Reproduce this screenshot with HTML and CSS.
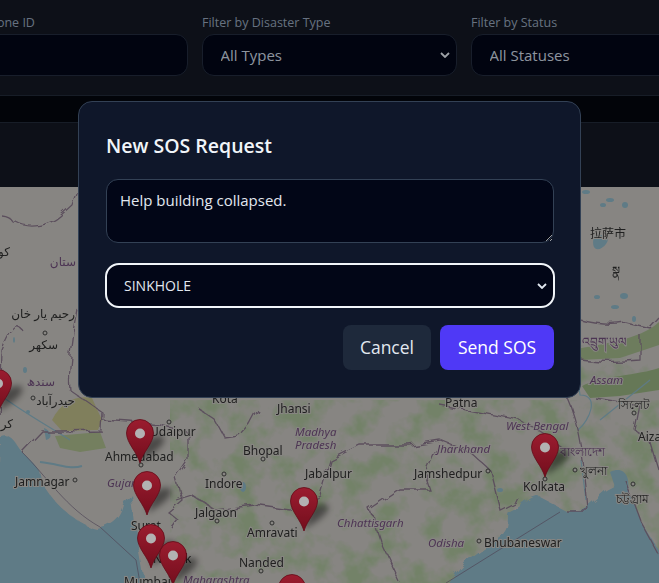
FILE: index.html
```html
<!DOCTYPE html>
<html lang="en">
<head>
  <meta charset="UTF-8">
  <meta name="viewport" content="width=device-width, initial-scale=1.0">
  <title>SOS Requests</title>
  <link rel="stylesheet" href="styles.css">
</head>
<body>

<div class="page">
  <div class="filters">
    <div class="field">
      <label for="droneId">Filter by Drone ID</label>
      <input type="text" id="droneId">
    </div>
    <div class="field">
      <label for="typeFilter">Filter by Disaster Type</label>
      <select id="typeFilter"><option>All Types</option></select>
    </div>
    <div class="field">
      <label for="statusFilter">Filter by Status</label>
      <select id="statusFilter"><option>All Statuses</option></select>
    </div>
  </div>
  <div class="strip"></div>
  <div class="toolbar"></div>

  <svg class="map" viewBox="0 187 659 396" width="659" height="396">
    <defs>
      <linearGradient id="pinFill" x1="0" y1="0" x2="0" y2="1">
        <stop offset="0" stop-color="#de2a44"/>
        <stop offset="1" stop-color="#a6142a"/>
      </linearGradient>
      <filter id="soft" x="-50%" y="-50%" width="200%" height="200%">
        <feGaussianBlur stdDeviation="3"/>
      </filter>
      <filter id="mottle" x="0" y="0" width="100%" height="100%">
        <feTurbulence type="fractalNoise" baseFrequency=".035" numOctaves="4" seed="7"/>
        <feColorMatrix type="matrix" values="0 0 0 0 .62  0 0 0 0 .82  0 0 0 0 .5  3.6 0 0 0 -1.55"/>
      </filter>
      <filter id="wiggle" x="-5%" y="-5%" width="110%" height="110%">
        <feTurbulence type="fractalNoise" baseFrequency=".07" numOctaves="2" seed="3" result="n"/>
        <feDisplacementMap in="SourceGraphic" in2="n" scale="9"/>
      </filter>
      <g id="pin">
        <path d="M0 -2 C18 -12 26 -20 24 -25 C22 -29 14 -27 6 -22 Z" fill="#000" opacity=".45" filter="url(#soft)"/>
        <path d="M0 0 C-3 -11 -13.5 -20 -13.5 -30 A13.5 13.5 0 1 1 13.5 -30 C13.5 -20 3 -11 0 0 Z" fill="url(#pinFill)" stroke="#8e0f22" stroke-width=".8"/>
        <circle cx="0" cy="-29.5" r="5" fill="#fff"/>
      </g>
    </defs>

    <g class="tiles">
      <!-- land and water -->
      <rect x="0" y="187" width="659" height="396" fill="#f2efe9"/>
      <rect x="170" y="400" width="489" height="183" filter="url(#mottle)"/>
      <rect x="575" y="345" width="84" height="40" filter="url(#mottle)"/>

      <g fill="#cfe3ab">
        <path d="M52 420 C62 400 78 395 92 398 L102 420 L98 430 L62 431 Z" fill="#e6e3a6"/>
        <path d="M55 436 L100 432 L106 448 L80 452 L60 448 Z"/>
        <path d="M582 386 C600 376 640 375 659 368 L659 390 L620 396 L590 398 Z" fill="#b8d89c"/>
        <path d="M572 350 C600 344 640 340 659 322 L659 345 L620 358 L580 360 Z" fill="#c4dea8"/>
      </g>

      <g filter="url(#wiggle)">
        <path d="M0 435 C8 432 14 440 22 452 C28 458 33 462 40 472 L44 487 C50 496 58 505 64 510 C76 520 88 528 97 529 C110 526 120 522 124 505 L131 494 L134 515 L136 535 L142 570 L146 590 L-5 590 Z" fill="#aadcf0"/>
        <path d="M446 590 C460 560 478 552 502 535 C512 525 505 515 510 512 C525 505 530 496 538 496 L565 510 L585 508 L606 490 L625 480 L640 520 L665 560 L665 590 Z" fill="#aadcf0"/>
      </g>
      <path d="M40 462 C60 464 70 470 82 466" fill="none" stroke="#aadcf0" stroke-width="2"/>
      <g fill="#aadcf0">
        <path d="M594 236 C602 234 612 236 606 244 C600 252 590 252 594 236 Z"/>
        <ellipse cx="610" cy="200" rx="4" ry="2"/><ellipse cx="625" cy="205" rx="3" ry="3"/>
        <ellipse cx="624" cy="296" rx="4" ry="3"/><ellipse cx="597" cy="297" rx="3" ry="2"/>
        <ellipse cx="615" cy="307" rx="4" ry="2"/><ellipse cx="634" cy="319" rx="2" ry="3"/>
        <ellipse cx="603" cy="205" rx="3" ry="2"/><ellipse cx="586" cy="192" rx="4" ry="2"/>
        <ellipse cx="14" cy="340" rx="1" ry="3"/><ellipse cx="25" cy="370" rx="2" ry="3"/>
        <path d="M44 428 C50 430 54 438 46 440 Z"/>
        <ellipse cx="28" cy="412" rx="2" ry="2"/>
        <ellipse cx="243" cy="487" rx="3" ry="5"/>
        <ellipse cx="500" cy="490" rx="3" ry="2"/>
        <path d="M610 472 C625 465 630 478 628 490 L616 490 Z"/>
      </g>

      <!-- rivers -->
      <g fill="none" stroke="#aadcf0" stroke-width="1.2">
        <path d="M578 430 C590 420 600 395 580 395 L578 380"/>
        <path d="M581 460 L586 500"/>
        <path d="M600 420 L650 380"/>
        <path d="M0 395 C20 410 38 420 70 440"/>
      </g>

      <!-- borders -->
      <g fill="none" stroke="#a68fa8" stroke-width="1.3" filter="url(#wiggle)">
        <path d="M0 214 C14 215 10 225 16 222 C30 230 50 225 60 216 L72 205 L78 187"/>
        <path d="M0 420 L2 350 C8 335 16 320 22 330"/>
        <path d="M78 310 C72 340 68 375 70 390 L102 412 L101 430 L60 431 L42 431 L22 452"/>
        <path d="M102 420 L130 422 L160 425 L188 432 L188 460 L176 478 L182 500 L168 512 L178 520 L172 528"/>
        <path d="M200 410 L215 420 L225 438 L240 436 L250 425 L258 410"/>
        <path d="M176 500 L192 495 L215 510 L255 505 L290 510 L320 495"/>
        <path d="M320 495 L330 460 L360 445 L410 445 L440 440 L470 452 L490 470"/>
        <path d="M490 470 L500 510 L520 500"/>
        <path d="M440 405 L520 420 L545 435 L565 450"/>
        <path d="M436 450 L425 475 L430 490 L400 490 L370 510 L380 540 L400 583"/>
        <path d="M575 318 C590 322 610 325 625 322 L650 328 L659 318"/>
        <path d="M575 358 C595 362 620 362 640 360 L640 335"/>
        <path d="M566 395 C580 425 585 470 588 510 L565 510"/>
        <path d="M595 398 L640 405 L635 430 L650 440 L659 470"/>
        <path d="M625 480 L640 520 L659 555"/>
      </g>
      <path d="M446 583 L560 512" fill="none" stroke="#8f7f9c" stroke-width="1" opacity=".7"/>
      <path d="M22 452 C48 478 66 508 100 527 L136 560 L140 583" fill="none" stroke="#8f7f9c" stroke-width="1" opacity=".7"/>

      <!-- labels -->
      <g class="city">
        <text x="105" y="461">Ahmedabad</text>
        <text x="150" y="436">Udaipur</text>
        <text x="243" y="455">Bhopal</text>
        <text x="15" y="486">Jamnagar</text>
        <text x="205" y="488">Indore</text>
        <text x="195" y="517">Jalgaon</text>
        <text x="131" y="530">Surat</text>
        <text x="247" y="537">Amravati</text>
        <text x="239" y="567">Nanded</text>
        <text x="153" y="563">Nashik</text>
        <text x="124" y="586">Mumbai</text>
        <text x="277" y="413">Jhansi</text>
        <text x="305" y="478">Jabalpur</text>
        <text x="212" y="403">Kota</text>
        <text x="445" y="407">Patna</text>
        <text x="414" y="478">Jamshedpur</text>
        <text x="523" y="491">Kolkata</text>
        <text x="484" y="547">Bhubaneswar</text>
        <text x="638" y="441">Aizawl</text>
        <text x="75" y="318" text-anchor="end">رحیم یار خان</text>
        <text x="58" y="349" text-anchor="end">سکھر</text>
        <text x="75" y="405" text-anchor="end">حیدرآباد</text>
        <text x="13" y="428" text-anchor="end">کرا</text>
        <text x="10" y="256" text-anchor="end">کو</text>
        <text x="590" y="238">拉萨市</text>
        <text x="580" y="475">খুলনা</text>
        <text x="618" y="409">সিলেট</text>
        <text x="616" y="503">চট্টগ্রাম</text>
        <text x="612" y="275">སྣ</text>
      </g>
      <g class="region">
        <text x="107" y="487">Gujarat</text>
        <text x="183" y="584">Maharashtra</text>
        <text x="295" y="436">Madhya</text>
        <text x="295" y="449">Pradesh</text>
        <text x="506" y="430">West Bengal</text>
        <text x="437" y="453">Jharkhand</text>
        <text x="337" y="527">Chhattisgarh</text>
        <text x="428" y="547">Odisha</text>
        <text x="590" y="384">Assam</text>
      </g>
      <g class="country">
        <text x="76" y="266" text-anchor="end">ستان</text>
        <text x="55" y="386" text-anchor="end">سندھ</text>
        <text x="560" y="456">বাংলাদেশ</text>
        <text x="582" y="346">འབྲུག་ཡུལ</text>
      </g>

      <!-- place dots -->
      <g class="dots">
        <circle cx="33" cy="398" r="2"/><circle cx="45" cy="333" r="2"/>
        <circle cx="169" cy="422" r="2"/><circle cx="263" cy="459" r="2"/>
        <circle cx="141" cy="465" r="2"/><circle cx="75" cy="480" r="2"/>
        <circle cx="224" cy="474" r="2"/><circle cx="217" cy="521" r="2"/>
        <circle cx="272" cy="523" r="2"/><circle cx="261" cy="571" r="2"/>
        <circle cx="488" cy="471" r="2"/><circle cx="545" cy="479" r="2"/>
        <circle cx="479" cy="541" r="2"/><circle cx="575" cy="470" r="2"/>
        <circle cx="634" cy="413" r="2"/><circle cx="633" cy="484" r="2"/>
        <circle cx="615" cy="275" r="2"/>
      </g>
    </g>

    <!-- markers -->
    <use href="#pin" x="-2" y="413"/>
    <use href="#pin" x="140" y="463"/>
    <use href="#pin" x="147" y="515"/>
    <use href="#pin" x="304" y="531"/>
    <use href="#pin" x="151" y="568"/>
    <use href="#pin" x="173" y="585"/>
    <use href="#pin" x="292" y="618"/>
    <use href="#pin" x="545" y="477"/>
  </svg>
</div>

<div class="overlay">
  <form class="modal">
    <h2>New SOS Request</h2>
    <textarea class="message">Help building collapsed.</textarea>
    <select class="type-select">
      <option>SINKHOLE</option>
    </select>
    <div class="actions">
      <button type="button" class="btn btn-cancel">Cancel</button>
      <button type="button" class="btn btn-send">Send SOS</button>
    </div>
  </form>
</div>

</body>
</html>
```

FILE: styles.css
```css
html, body {
  margin: 0;
  padding: 0;
  height: 100%;
  overflow: hidden;
  background: #020617;
  color-scheme: dark;
  font-family: 'Open Sans', 'Noto Sans', sans-serif;
}

.page {
  display: flex;
  flex-direction: column;
  height: 583px;
  overflow: hidden;
}

/* filter bar behind the modal */
.filters {
  display: flex;
  gap: 14.5px;
  height: 95px;
  flex: none;
  box-sizing: border-box;
  padding: 14px 0 0 0;
  margin-left: -67px;
  width: 820px;
  background: #131823;
}

.field {
  width: 254.5px;
  flex: none;
}

.field label {
  display: block;
  font-size: 12.5px;
  line-height: 18px;
  margin-bottom: 2px;
  color: #94a3b8;
}

.field input, .field select {
  width: 100%;
  height: 42px;
  box-sizing: border-box;
  padding: 0 17.5px;
  border: 1px solid #232c3e;
  border-radius: 12px;
  background-color: #020617;
  color: #cbd5e1;
  font-family: inherit;
  font-size: 15px;
}

.field select, .type-select {
  appearance: none;
  background-image: url("data:image/svg+xml,%3Csvg xmlns='http://www.w3.org/2000/svg' width='10' height='6'%3E%3Cpath d='M1 1l4 4 4-4' fill='none' stroke='%23e2e8f0' stroke-width='1.8'/%3E%3C/svg%3E");
  background-repeat: no-repeat;
  background-position: right 6px center;
}

.strip {
  height: 26px;
  flex: none;
  background: #03060e;
  border-top: 1px solid #222a38;
  border-bottom: 1px solid #222a38;
}

.toolbar {
  height: 64px;
  flex: none;
  background: #131823;
}

.map {
  display: block;
  flex: none;
}

/* the tile layer is dimmed and a little soft */
.tiles {
  filter: brightness(0.8) blur(0.6px);
}

.map text {
  font-family: 'Noto Sans', 'DejaVu Sans', 'Noto Sans CJK SC', sans-serif;
  font-size: 12px;
  paint-order: stroke;
  stroke: #f2efe9;
  stroke-width: 2px;
}

.city text {
  fill: #3a3a3a;
}

.region text {
  fill: #8a5f96;
  font-style: italic;
  font-size: 11.5px;
}

.country text {
  fill: #8a5f96;
}

.dots circle {
  fill: #f2efe9;
  stroke: #555;
  stroke-width: 1;
}

/* modal */
.overlay {
  position: fixed;
  inset: 0;
  display: flex;
  align-items: flex-start;
  justify-content: center;
  padding-top: 101px;
  box-sizing: border-box;
  background: rgba(0, 0, 0, 0.3);
}

.modal {
  width: 503px;
  height: 297px;
  box-sizing: border-box;
  padding: 28px 26px 26px 27px;
  display: flex;
  flex-direction: column;
  background: #0f172a;
  border: 1px solid #334155;
  border-radius: 14px;
}

.modal h2 {
  margin: 0 0 17px 0;
  font-size: 19.5px;
  line-height: 32px;
  font-weight: 600;
  color: #f1f5f9;
}

.message {
  width: 448px;
  height: 64px;
  box-sizing: border-box;
  margin-bottom: 20px;
  padding: 10px 13px;
  border: 1px solid #334155;
  border-radius: 12px;
  background: #020617;
  color: #e2e8f0;
  font-family: inherit;
  font-size: 15px;
  line-height: 20px;
}

.type-select {
  width: 450px;
  height: 45px;
  margin-left: -1px;
  box-sizing: border-box;
  padding: 0 17px;
  border: 2px solid #f1f5f9;
  border-radius: 14px;
  background-color: #020617;
  color: #e2e8f0;
  font-family: inherit;
  font-size: 14px;
}

.actions {
  display: flex;
  justify-content: flex-end;
  gap: 9px;
  margin-top: 17px;
}

.btn {
  height: 45px;
  padding: 0 17px 2px;
  border: none;
  border-radius: 8px;
  font-family: inherit;
  font-size: 17.5px;
  cursor: pointer;
}

.btn-cancel {
  background: #1e293b;
  color: #e2e8f0;
}

.btn-send {
  width: 114px;
  background: #4f39f6;
  color: #fff;
}
```
